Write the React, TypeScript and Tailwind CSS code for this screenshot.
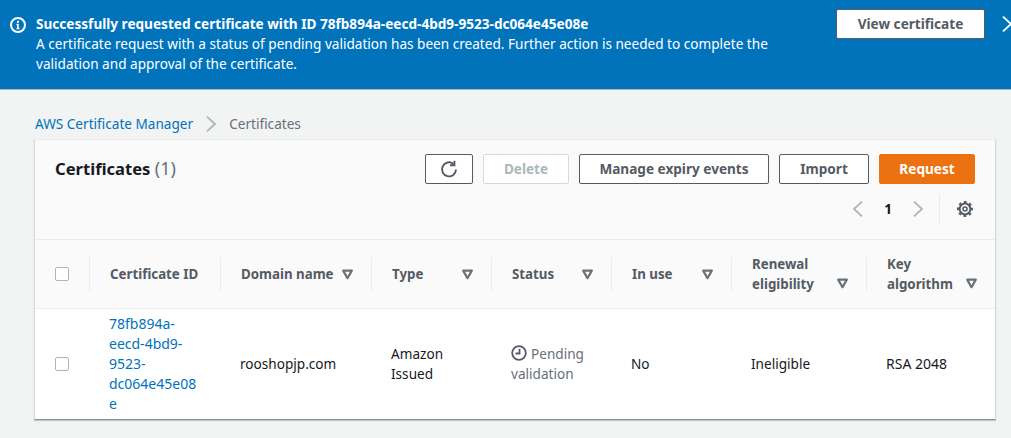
const font = "font-['Noto_Sans','Open_Sans',sans-serif]";

function Caret() {
  return (
    <svg className="h-[11px] w-[11px] shrink-0" viewBox="0 0 11 11" fill="none" stroke="#687078" strokeWidth="2.2">
      <path d="M1.2 1.6h8.6L5.5 9.2z" strokeLinejoin="round" />
    </svg>
  );
}

function Chevron({ dir, color }: { dir: "left" | "right"; color: string }) {
  return (
    <svg className="shrink-0" width="16" height="16" viewBox="0 0 16 16" fill="none" stroke={color} strokeWidth="1.8">
      <path d={dir === "left" ? "M12 .6 4 8l8 7.4" : "M4 .6 12 8l-8 7.4"} />
    </svg>
  );
}

function Checkbox() {
  return <div className="h-[14px] w-[14px] rounded-[2px] border border-[#aab7b8] bg-white" />;
}

function Button({ children, className }: { children: React.ReactNode; className: string }) {
  return (
    <button className={`flex items-center justify-center rounded-[2px] border text-[13.6px] font-bold ${className}`}>
      {children}
    </button>
  );
}

function HeaderCell({ label, width, last, lines }: { label: string; width: string; last?: boolean; lines?: boolean }) {
  return (
    <div className={`${width} flex h-[34px] items-center justify-between pl-[20px] pr-[18px] ${last ? "" : "border-r border-[#eaeded]"}`}>
      <span className="text-[13.3px] font-bold whitespace-pre-line text-[#545b64]">{label}</span>
      <div className={lines ? "self-end mb-[2px]" : ""}>
        <Caret />
      </div>
    </div>
  );
}

export default function App() {
  return (
    <div className={`${font} h-[438px] w-[1011px] overflow-hidden bg-[#f2f3f3] text-[13.6px] leading-[20px] text-[#16191f]`}>
      <div className="flex h-[90px] border-b border-[#aab7b8] bg-[#0073bb] text-white">
        <div className="shrink-0 pl-[10px] pt-[17px]">
          <svg width="16" height="16" viewBox="0 0 16 16" fill="none">
            <circle cx="8" cy="8" r="7" stroke="white" strokeWidth="2" />
            <path d="M8 7v4.5M6.5 7.5H8M6.5 11.5h3" stroke="white" strokeWidth="1.6" />
            <rect x="7" y="3.8" width="2" height="2" fill="white" />
          </svg>
        </div>
        <div className="ml-[10px] w-[770px] shrink-0 pt-[14px]">
          <div className="font-bold">Successfully requested certificate with ID 78fb894a-eecd-4bd9-9523-dc064e45e08e</div>
          <div>A certificate request with a status of pending validation has been created. Further action is needed to complete the validation and approval of the certificate.</div>
        </div>
        <div className="ml-[30px] shrink-0 pt-[9px]">
          <Button className="h-[30px] w-[149px] border-[#545b64] bg-white text-[#545b64]">View certificate</Button>
        </div>
        <div className="ml-[14px] shrink-0 pt-[16px]">
          <Chevron dir="right" color="#ffffff" />
        </div>
      </div>

      <div className="flex h-[49px] items-start pl-[35px] pt-[24px]">
        <span className="text-[#0073bb]">AWS Certificate Manager</span>
        <span className="mx-[10px] mt-[2px]">
          <Chevron dir="right" color="#aab7b8" />
        </span>
        <span className="text-[#687078]">Certificates</span>
      </div>

      <div className="ml-[34px] w-[962px] border-t border-r border-b border-l border-t-[#eaeded] border-r-[#d5dbdb] border-b-[#879596] border-l-[#d5dbdb] bg-white shadow-[0_1px_1px_rgba(0,28,36,0.2)]">
        <div className="h-[99px] bg-[#fafafa] pl-[20px] pr-[20px] pt-[14px]">
          <div className="flex h-[30px] items-start justify-between">
            <h1 className="h-[30px] text-[16.6px] font-bold leading-[30px] text-[#16191f]">
              Certificates <span className="text-[18px] leading-[20px] font-normal text-[#687078]">(1)</span>
            </h1>
            <div className="flex gap-[10px]">
              <Button className="h-[30px] w-[48px] border-[#545b64] bg-white text-[#545b64]">
                <svg width="18" height="18" viewBox="0 0 18 18" fill="none" stroke="#545b64" strokeWidth="1.9">
                  <path d="M16 9.5a7 7 0 1 1-2.6-5.6" />
                  <path d="M14.4.8v4.4H10" />
                </svg>
              </Button>
              <Button className="h-[30px] w-[86px] border-[#d5dbdb] bg-white text-[#aab7b8]">Delete</Button>
              <Button className="h-[30px] w-[190px] border-[#545b64] bg-white text-[#545b64]">Manage expiry events</Button>
              <Button className="h-[30px] w-[90px] border-[#545b64] bg-white text-[#545b64]">Import</Button>
              <Button className="h-[30px] w-[96px] border-[#ec7211] bg-[#ec7211] text-white">Request</Button>
            </div>
          </div>
          <div className="mt-[10px] flex h-[30px] items-center justify-end">
            <Chevron dir="left" color="#aab7b8" />
            <span className="mx-[18px] font-bold text-[#16191f]">1</span>
            <Chevron dir="right" color="#aab7b8" />
            <div className="ml-[13px] flex h-[30px] items-center border-l border-[#eaeded] pl-[17px] pr-[2px]">
              <svg width="16" height="16" viewBox="0 0 16 16" fill="none" stroke="#545b64">
                <circle cx="8" cy="8" r="5.4" strokeWidth="2" />
                <circle cx="8" cy="8" r="7" strokeWidth="2" strokeDasharray="2.75 2.75" strokeDashoffset="1.375" />
                <circle cx="8" cy="8" r="2" strokeWidth="1.6" />
              </svg>
            </div>
          </div>
        </div>

        <div className="flex h-[70px] items-center border-t border-b border-[#eaeded] bg-[#fafafa]">
          <div className="flex h-[34px] w-[55px] items-center border-r border-[#eaeded] pl-[20px]">
            <Checkbox />
          </div>
          <div className="flex h-[34px] w-[131px] items-center border-r border-[#eaeded] pl-[20px] text-[13.3px] font-bold text-[#545b64]">Certificate ID</div>
          <HeaderCell label="Domain name" width="w-[151px]" />
          <HeaderCell label="Type" width="w-[120px]" />
          <HeaderCell label="Status" width="w-[120px]" />
          <HeaderCell label="In use" width="w-[120px]" />
          <HeaderCell label={"Renewal\neligibility"} width="w-[135px]" lines />
          <HeaderCell label={"Key\nalgorithm"} width="w-[128px]" last lines />
        </div>

        <div className="flex h-[110px] items-center">
          <div className="w-[55px] pl-[20px]">
            <Checkbox />
          </div>
          <div className="w-[131px] pl-[19px] text-[14px] text-[#0073bb]">
            78fb894a-
            <br />
            eecd-4bd9-
            <br />
            9523-
            <br />
            dc064e45e08
            <br />e
          </div>
          <div className="w-[151px] pl-[19px]">rooshopjp.com</div>
          <div className="w-[120px] pl-[19px]">
            Amazon
            <br />
            Issued
          </div>
          <div className="w-[120px] pl-[19px] text-[#687078]">
            <svg className="mr-[4px] inline-block align-[-2px]" width="16" height="16" viewBox="0 0 16 16" fill="none" stroke="#545b64" strokeWidth="1.8">
              <circle cx="8" cy="8" r="6.8" />
              <path d="M8.5 3.8v4.7H4.5" />
            </svg>
            Pending
            <br />
            validation
          </div>
          <div className="w-[120px] pl-[19px]">No</div>
          <div className="w-[135px] pl-[19px]">Ineligible</div>
          <div className="w-[128px] pl-[19px] text-[14px]">RSA 2048</div>
        </div>
      </div>
    </div>
  );
}
